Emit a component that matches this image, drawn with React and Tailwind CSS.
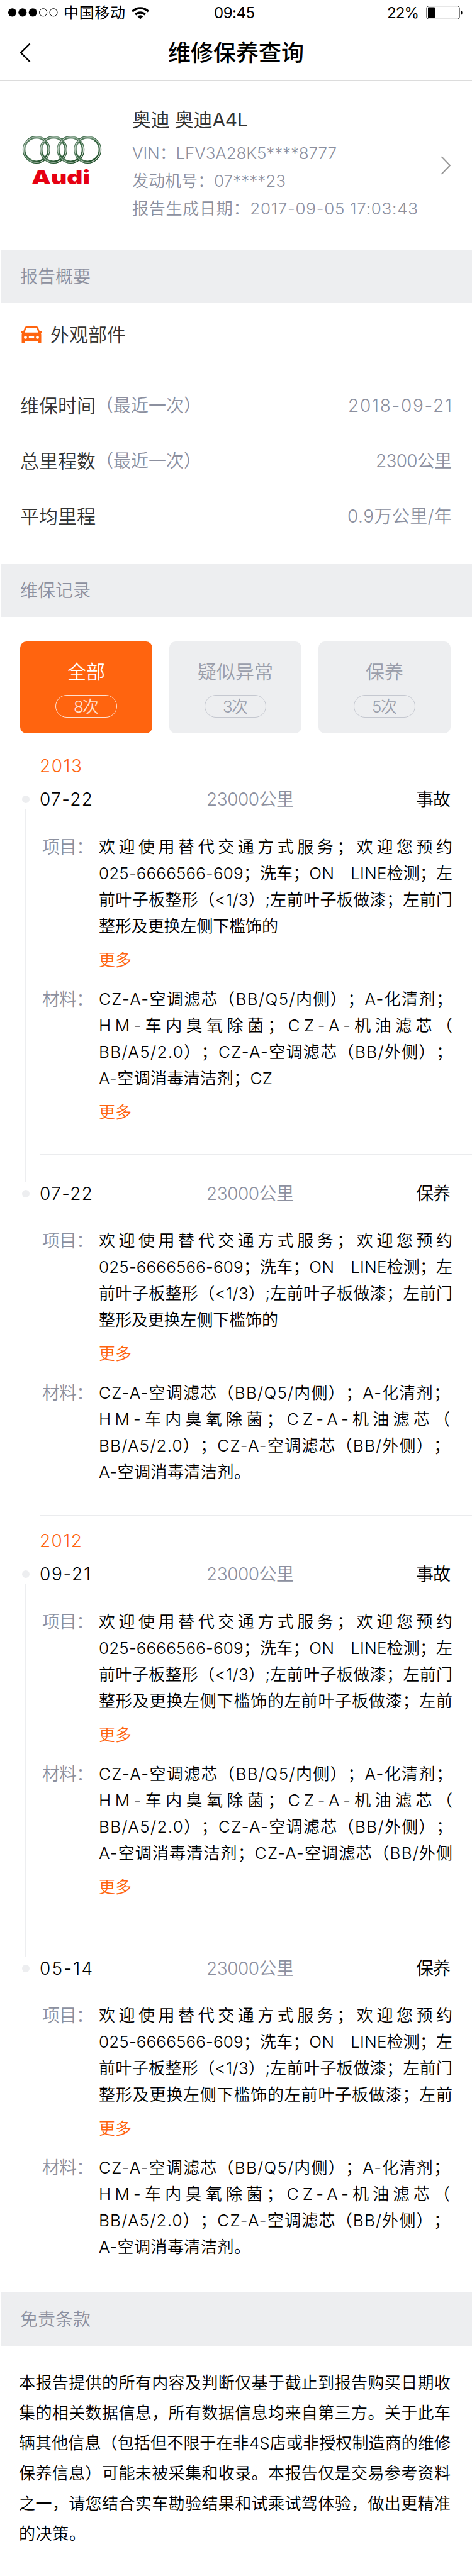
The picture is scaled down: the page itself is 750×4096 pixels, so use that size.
import { useLayoutEffect, useRef, useState } from "react";

// Sets letter spacing so that one line of text fills the given width.
function Fit({ w, children, className = "" }) {
  const ref = useRef(null);
  const [gap, setGap] = useState(0);
  useLayoutEffect(() => {
    const natural = ref.current.getBoundingClientRect().width;
    const count = Array.from(children).length;
    setGap((w - natural) / (count - 1));
  }, [w, children]);
  return (
    <span className={`block whitespace-pre ${className}`} style={{ width: w }}>
      <span ref={ref} style={{ letterSpacing: `${gap}px` }}>{children}</span>
    </span>
  );
}

const PROJECT_HEAD = [
  ["欢迎使用替代交通方式服务；欢迎您预约", 562],
  ["025-6666566-609；洗车；ON　LINE检测；左", 562],
  ["前叶子板整形（<1/3）;左前叶子板做漆；左前门", 562],
];
const PROJECT_SHORT = [...PROJECT_HEAD, ["整形及更换左侧下槛饰的", 285]];
const PROJECT_LONG = [...PROJECT_HEAD, ["整形及更换左侧下槛饰的左前叶子板做漆；左前", 562]];
const material = (w, last) => [
  ["CZ-A-空调滤芯（BB/Q5/内侧）；A-化清剂；", w],
  ["HM-车内臭氧除菌；CZ-A-机油滤芯（", w],
  ["BB/A5/2.0）；CZ-A-空调滤芯（BB/外侧）；", w],
  last,
];

const YEARS = [
  {
    year: "2013",
    records: [
      { date: "07-22", dateW: 84, type: "事故", project: PROJECT_SHORT, material: material(562, ["A-空调消毒清洁剂；CZ", 276]), more: true },
      { date: "07-22", dateW: 84, type: "保养", project: PROJECT_SHORT, material: material(558, ["A-空调消毒清洁剂。", 241]) },
    ],
  },
  {
    year: "2012",
    records: [
      { date: "09-21", dateW: 81, type: "事故", project: PROJECT_LONG, material: material(562, ["A-空调消毒清洁剂；CZ-A-空调滤芯（BB/外侧", 562]), more: true },
      { date: "05-14", dateW: 84, type: "保养", project: PROJECT_LONG, material: material(558, ["A-空调消毒清洁剂。", 241]) },
    ],
  },
];

const DISCLAIMER = [
  ["本报告提供的所有内容及判断仅基于截止到报告购买日期收", 686],
  ["集的相关数据信息，所有数据信息均来自第三方。关于此车", 686],
  ["辆其他信息（包括但不限于在非4S店或非授权制造商的维修", 686],
  ["保养信息）可能未被采集和收录。本报告仅是交易参考资料", 686],
  ["之一，请您结合实车勘验结果和试乘试驾体验，做出更精准", 686],
  ["的决策。", 106],
];

const More = () => <div className="mt-3 h-[42px] leading-[42px] text-[26px] text-[#ff640f]">更多</div>;

function Detail({ label, lines, more }) {
  return (
    <div className="flex">
      <div className="w-[93px] shrink-0 pl-[3px] text-[28px] leading-[42px] text-[#8c909f]">
        <Fit w={82}>{label}</Fit>
      </div>
      <div className="text-[26px] leading-[42px] text-black">
        {lines.map(([t, w], i) => <Fit key={i} w={w}>{t}</Fit>)}
        {more && <More />}
      </div>
    </div>
  );
}

function Record({ r, first, last }) {
  return (
    <div className={`flex ${first ? "h-[627px]" : "h-[532px]"}`}>
      <div className="flex w-16 shrink-0 flex-col items-center pl-[17px]">
        <div className="mt-[14px] size-3 shrink-0 rounded-full bg-[#edeef0]" />
        {first && <div className="mt-[9px] -mb-[2px] w-px flex-1 bg-[#edeef0]" />}
      </div>
      <div className="flex-1">
        <div className={`${first ? "h-[584px]" : "h-[531px]"} ${last ? "" : "box-content border-b border-[#ebecee]"}`}>
          <div className="flex h-10 items-center text-[28px] leading-10 text-black">
            <Fit w={r.dateW} className="-ml-px shrink-0">{r.date}</Fit>
            <div className="flex flex-1 justify-end text-[#8c909f]">
              <Fit w={139}>23000公里</Fit>
            </div>
            <div className="flex w-[283px] justify-end pr-[34px]"><Fit w={55}>{r.type}</Fit></div>
          </div>
          <div className={first ? "mt-[35px]" : "mt-[34px]"}>
            <Detail label="项目：" lines={r.project} more />
          </div>
          <div className="mt-5">
            <Detail label="材料：" lines={r.material} more={r.more} />
          </div>
        </div>
      </div>
    </div>
  );
}

const Band = ({ children }) => (
  <div className="ml-px flex h-[85px] items-center bg-[#edeef0] pt-px pl-[31px] text-[28px] text-[#8c909f]">{children}</div>
);

function Row({ label, note, value, w }) {
  return (
    <div className="flex h-[88px] items-center justify-between px-8">
      <div className="flex items-center text-[30px] text-[#333]">
        {label}
        {note && <span className="text-[28px] text-[#8c909f]">{note}</span>}
      </div>
      <div className="text-[28px] text-[#8c909f]"><Fit w={w}>{value}</Fit></div>
    </div>
  );
}

function Tab({ label, count, active }) {
  return (
    <div className={`flex h-[146px] w-[210px] flex-col items-center rounded-[10px] ${active ? "bg-[#ff640f] text-white" : "bg-[#edeef0] text-[#9a9eab]"}`}>
      <div className="mt-[27px] h-[42px] text-[30px] leading-[42px]">{label}</div>
      <div className={`mt-4 flex h-9 w-[98px] items-center justify-center rounded-full border text-[26px] ${active ? "border-white/80 text-white/80" : "border-[#c5c8d0]"}`}>
        <Fit w={40}>{count}</Fit>
      </div>
    </div>
  );
}

function AudiLogo() {
  return (
    <svg width="130" height="100" viewBox="0 0 130 100">
      <defs>
        <linearGradient id="ring" x1="0.1" y1="0" x2="0.8" y2="1">
          <stop offset="0" stopColor="#1f4e2b" />
          <stop offset="0.25" stopColor="#7f9f87" />
          <stop offset="0.45" stopColor="#2b5c37" />
          <stop offset="0.7" stopColor="#4d7857" />
          <stop offset="1" stopColor="#0f4019" />
        </linearGradient>
        <linearGradient id="shine" x1="0" y1="0" x2="1" y2="0.6">
          <stop offset="0" stopColor="#fff" stopOpacity="0.9" />
          <stop offset="0.5" stopColor="#cfdcd2" stopOpacity="0.6" />
          <stop offset="1" stopColor="#fff" stopOpacity="0.85" />
        </linearGradient>
      </defs>
      {[24.8, 52, 79.300, 106.200].map((x) => (
        <g key={x} fill="none">
          <circle cx={x} cy="24" r="19.7" stroke="url(#ring)" strokeWidth="4.600" />
          <circle cx={x} cy="24" r="20.200" stroke="url(#shine)" strokeWidth="1.100" />
        </g>
      ))}
      <text x="17" y="79" textLength="93" lengthAdjust="spacingAndGlyphs" fontFamily="Inter, sans-serif" fontWeight="900" fontSize="30" fill="#e60012">Audi</text>
    </svg>
  );
}

export default function App() {
  return (
    <div className="h-[4096px] w-[750px] overflow-hidden bg-white font-[350] font-['Inter','Noto_Sans_CJK_SC',sans-serif] [text-spacing-trim:space-all]">
      <header className="h-[129px] border-b border-[#dcdcdc] text-black">
        <div className="flex h-10 items-center font-normal">
          <svg width="92" height="40" viewBox="0 0 92 40">
            {[19.5, 35.8, 52.2].map((x) => <circle key={x} cx={x} cy="19.8" r="6.6" />)}
            {[68.6, 85].map((x) => <circle key={x} cx={x} cy="19.8" r="6.1" fill="none" stroke="#000" />)}
          </svg>
          <div className="ml-[9px] w-[108px] pt-0.5 text-[24px] leading-10"><Fit w={98}>中国移动</Fit></div>
          <svg width="28" height="21" viewBox="0 0 28 21" fill="none" stroke="#000" strokeWidth="3.4">
            <path d="M1.2 8.2a18.2 18.2 0 0 1 25.6 0" />
            <path d="M6.2 13.2a11.2 11.2 0 0 1 15.6 0" />
            <path d="M14 20.6l-4.6-4.5a6.6 6.6 0 0 1 9.2 0z" fill="#000" stroke="none" />
          </svg>
          <div className="ml-[103px] w-[65px] pt-0.5 text-[24px] leading-10"><Fit w={65}>09:45</Fit></div>
          <div className="ml-[210px] w-[52px] pt-0.5 text-[24px] leading-10"><Fit w={51}>22%</Fit></div>
          <svg className="ml-[10px]" width="62" height="40" viewBox="0 0 62 40">
            <rect x="1" y="9.6" width="52" height="20.8" rx="3" fill="none" stroke="#000" />
            <rect x="3" y="11.5" width="11" height="17" rx="1" />
            <path d="M55 16.5c3.6 1 3.6 6.500 0 7.500z" />
          </svg>
        </div>
        <div className="flex h-[88px] items-center">
          <svg className="ml-[30px]" width="20" height="32" viewBox="0 0 20 32" fill="none" stroke="#000" strokeWidth="2.400">
            <path d="M17.500 1.500 3 15.800l14.500 14.300" />
          </svg>
          <div className="ml-[217px] text-[36px] font-medium">维修保养查询</div>
        </div>
      </header>

      <section className="flex h-[268px] items-center">
        <div className="mt-[85px] ml-[33px] h-[100px] w-[130px] self-start"><AudiLogo /></div>
        <div className="ml-[47px] flex-1 self-start pt-[39px]">
          <div className="h-[54px] text-[30px] leading-[44px] font-normal text-[#333]"><Fit w={184}>奥迪 奥迪A4L</Fit></div>
          <div className="text-[26px] leading-[44px] text-[#8c909f]">
            <Fit w={325}>VIN：LFV3A28K5****8777</Fit>
            <Fit w={244}>发动机号：07****23</Fit>
            <Fit w={454}>报告生成日期：2017-09-05 17:03:43</Fit>
          </div>
        </div>
        <svg className="mr-8" width="18" height="32" viewBox="0 0 18 32" fill="none" stroke="#999" strokeWidth="2">
          <path d="M1.500 2 15 16 1.500 30" />
        </svg>
      </section>

      <Band>报告概要</Band>
      <div className="ml-[33px] flex h-[99px] items-center border-b border-[#ebecee] pt-0.5">
        <svg width="34" height="27" viewBox="0 0 34 27">
          <path fill="#ff640f" fillRule="evenodd" d="M9.500 0h15c1.700 0 2.900.8 3.400 2.200L30 8h3c1.300 0 1.300 2 0 2h-1.500c.7.900 1 1.800 1 3v12.500c0 .8-.6 1.500-1.500 1.500h-2c-.9 0-1.500-.7-1.500-1.500V24h-21v1.500c0 .8-.6 1.500-1.500 1.500H3c-.9 0-1.500-.7-1.500-1.500V13c0-1.200.3-2.100 1-3H1C-.3 10-.3 8 1 8h3l2.100-5.800C6.600.8 7.800 0 9.500 0zM9.800 2.500c-.8 0-1.300.4-1.500 1L6.400 9.800h21.200l-1.900-6.300c-.2-.6-.7-1-1.500-1zM7.500 15a2.400 2.400 0 1 0 0 4.800 2.400 2.400 0 0 0 0-4.800zM26.500 15a2.400 2.400 0 1 0 0 4.800 2.400 2.400 0 0 0 0-4.800zM12.800 15.500v3.600h8.400v-3.600z" />
        </svg>
        <div className="ml-[13px] text-[30px] text-[#333]">外观部件</div>
      </div>
      <div className="h-[315px] pt-5">
        <Row label="维保时间" note="（最近一次）" value="2018-09-21" w={165} />
        <Row label="总里程数" note="（最近一次）" value="2300公里" w={121} />
        <Row label="平均里程" value="0.9万公里/年" w={166} />
      </div>

      <Band>维保记录</Band>
      <div className="flex gap-[27px] pt-[39px] pl-8">
        <Tab label="全部" count="8次" active />
        <Tab label="疑似异常" count="3次" />
        <Tab label="保养" count="5次" />
      </div>

      {YEARS.map(({ year, records }, g) => (
        <section key={year}>
          <div className={`pl-[63px] text-[28px] leading-[40px] text-[#ff640f] ${g === 0 ? "h-[85px] pt-8" : "h-[73px] pt-5"}`}>
            <Fit w={67}>{year}</Fit>
          </div>
          {records.map((r, i) => <Record key={i} r={r} first={i === 0} last={g === 1 && i === 1} />)}
        </section>
      ))}

      <div className="pt-[3px]"><Band>免责条款</Band></div>
      <div className="pt-[35px] pl-[30px] text-[26px] leading-[48px] text-black">
        {DISCLAIMER.map(([t, w], i) => <Fit key={i} w={w}>{t}</Fit>)}
      </div>
    </div>
  );
}
